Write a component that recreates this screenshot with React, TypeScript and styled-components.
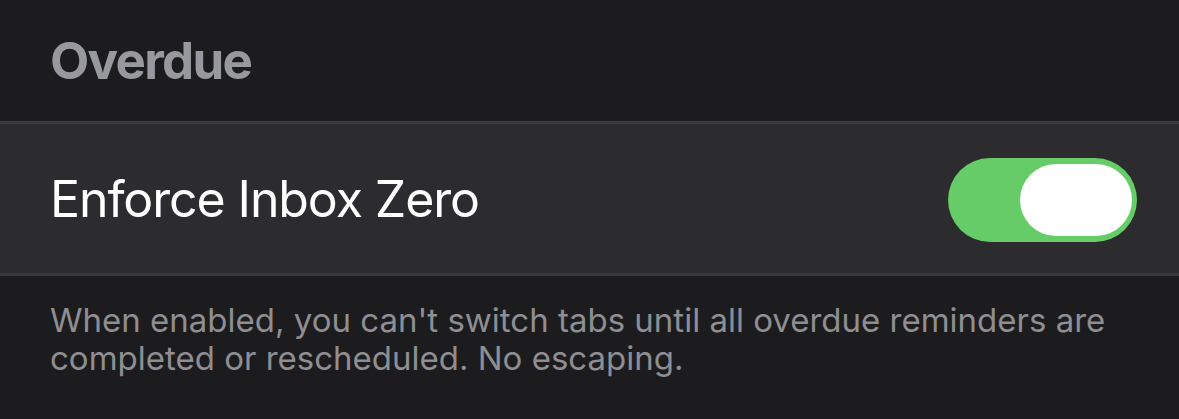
import React, {useState} from 'react';
import styled, {createGlobalStyle} from 'styled-components';

const GlobalStyle = createGlobalStyle`
  html, body {
    margin: 0;
    padding: 0;
    background: #1c1c1e;
  }
  body {
    font-family: Inter, 'Noto Sans', sans-serif;
    -webkit-font-smoothing: antialiased;
  }
`;

const StyledPage = styled.div`
  width: 1179px;
  height: 419px;
  background: #1c1c1e;
  overflow: hidden;
`;

const StyledHeader = styled.div`
  height: 121px;
  box-sizing: border-box;
  padding: 35px 0 0 50px;
  font-size: 51px;
  line-height: 1;
  font-weight: 700;
  letter-spacing: -1.7px;
  color: #98989f;
`;

const StyledRow = styled.div`
  height: 149px;
  border-top: 3px solid #3a3a3d;
  border-bottom: 3px solid #3a3a3d;
  background: #2c2c2e;
  display: flex;
  align-items: center;
  justify-content: space-between;
  padding: 0 42px 0 50px;
`;

const StyledLabel = styled.div`
  font-size: 50px;
  color: #fff;
  font-weight: 400;
  letter-spacing: -1.1px;
`;

const StyledSwitch = styled.button<{on: boolean}>`
  width: 189px;
  height: 84px;
  border: none;
  border-radius: 42px;
  padding: 0 5px;
  margin-top: 2px;
  background: ${props => props.on ? '#65cc68' : '#3a3a3c'};
  display: flex;
  align-items: center;
  justify-content: ${props => props.on ? 'flex-end' : 'flex-start'};
  cursor: pointer;
`;

const StyledKnob = styled.span`
  width: 112px;
  height: 72px;
  border-radius: 36px;
  background: #fff;
`;

const StyledFooter = styled.div`
  padding: 25px 60px 0 50px;
  font-size: 33px;
  line-height: 38px;
  color: #8e8e93;
`;

const App: React.FC = () => {
  const [enabled, setEnabled] = useState(true);
  return (
    <StyledPage>
      <GlobalStyle/>
      <StyledHeader>Overdue</StyledHeader>
      <StyledRow>
        <StyledLabel>Enforce Inbox Zero</StyledLabel>
        <StyledSwitch on={enabled} onClick={() => setEnabled(!enabled)}>
          <StyledKnob/>
        </StyledSwitch>
      </StyledRow>
      <StyledFooter>
        When enabled, you can't switch tabs until all overdue reminders are completed or rescheduled. No escaping.
      </StyledFooter>
    </StyledPage>
  );
};

export default App;
